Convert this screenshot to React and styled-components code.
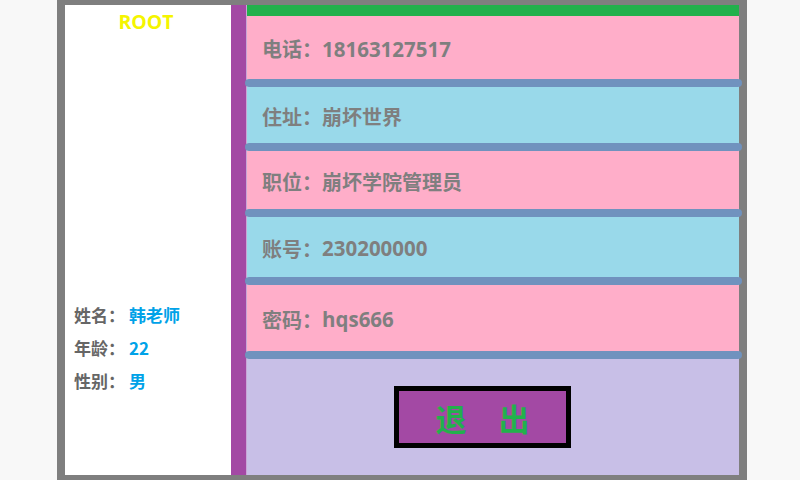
import React from 'react';
import styled, { createGlobalStyle } from 'styled-components';

const GlobalStyle = createGlobalStyle`
  html, body {
    margin: 0;
    padding: 0;
    background: #f8f8f8;
    overflow: hidden;
  }
  body {
    font-family: "Noto Sans CJK SC", "Noto Sans", sans-serif;
  }
`;

const Frame = styled.div`
  margin-left: 57px;
  width: 674px;
  height: 470px;
  border: 8px solid #7f7f7f;
  border-top-width: 5px;
  border-bottom-width: 5px;
  display: flex;
`;

const Side = styled.div`
  width: 166px;
  background: #fff;
  display: flex;
  flex-direction: column;
  padding-top: 5px;
  box-sizing: border-box;
`;

const RootTitle = styled.div`
  text-align: center;
  color: #f5f500;
  font-family: "Open Sans", "Noto Sans", sans-serif;
  font-weight: 700;
  font-size: 19.5px;
  line-height: 24px;
  padding-right: 4px;
`;

const Info = styled.div`
  margin-top: 264px;
  padding-left: 9px;
`;

const InfoLine = styled.div`
  display: flex;
  height: 33px;
  align-items: center;
  font-size: 17px;
  font-weight: 700;
`;

const InfoLabel = styled.span`
  color: #666;
  width: 55px;
  font-weight: 700;
`;

const InfoValue = styled.span`
  color: #00a2e8;
`;

const Divider = styled.div`
  width: 16px;
  background: #a349a4;
  border-right: 1px solid #c9a6d6;
  box-sizing: border-box;
`;

const Main = styled.div`
  width: 492px;
  display: flex;
  flex-direction: column;
`;

const TopStrip = styled.div`
  height: 11px;
  background: #22b14c;
`;

const Row = styled.div`
  height: ${p => p.$h}px;
  background: ${p => p.$bg};
  display: flex;
  align-items: center;
  padding: 2px 0 0 15px;
  box-sizing: border-box;
  font-size: 20px;
  font-weight: 700;
  color: #7f7f7f;
`;

const Bar = styled.div`
  height: 8px;
  margin: 0 -3px 0 -2px;
  background: #7092be;
  border-radius: 4px;
  position: relative;
  z-index: 1;
`;

const Num = styled.span`
  font-family: "Open Sans", "Noto Sans", sans-serif;
  font-size: 20.5px;
`;

const Footer = styled.div`
  flex: 1;
  background: #c8bfe7;
  display: flex;
  align-items: center;
  padding-left: 147px;
`;

const ExitButton = styled.button`
  width: 177px;
  height: 62px;
  box-sizing: border-box;
  border: 5px solid #000;
  background: #a349a4;
  color: #22b14c;
  font-family: "Noto Sans CJK SC", sans-serif;
  font-size: 31px;
  font-weight: 700;
  letter-spacing: 32px;
  padding: 0 0 0 32px;
  cursor: pointer;
`;

const rows = [
  { label: '电话：', value: '18163127517', bg: '#ffaec9', h: 63 },
  { label: '住址：', value: '崩坏世界', bg: '#99d9ea', h: 56, cjk: true },
  { label: '职位：', value: '崩坏学院管理员', bg: '#ffaec9', h: 58, cjk: true },
  { label: '账号：', value: '230200000', bg: '#99d9ea', h: 60 },
  { label: '密码：', value: 'hqs666', bg: '#ffaec9', h: 66 },
];

const info = [
  { label: '姓名：', value: '韩老师' },
  { label: '年龄：', value: '22' },
  { label: '性别：', value: '男' },
];

export default function App() {
  return (
    <>
      <GlobalStyle />
      <Frame>
        <Side>
          <RootTitle>ROOT</RootTitle>
          <Info>
            {info.map(i => (
              <InfoLine key={i.label}>
                <InfoLabel>{i.label}</InfoLabel>
                <InfoValue>{i.value}</InfoValue>
              </InfoLine>
            ))}
          </Info>
        </Side>
        <Divider />
        <Main>
          <TopStrip />
          {rows.map(r => (
            <React.Fragment key={r.label}>
              <Row $bg={r.bg} $h={r.h}>
                {r.label}
                {r.cjk ? r.value : <Num>{r.value}</Num>}
              </Row>
              <Bar />
            </React.Fragment>
          ))}
          <Footer>
            <ExitButton>退出</ExitButton>
          </Footer>
        </Main>
      </Frame>
    </>
  );
}
